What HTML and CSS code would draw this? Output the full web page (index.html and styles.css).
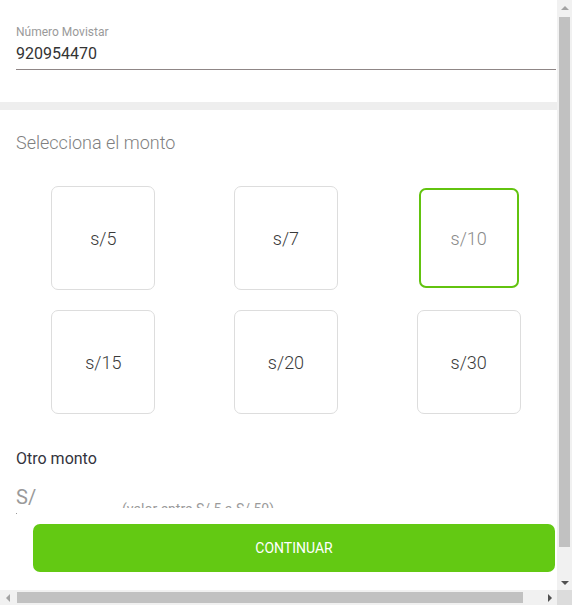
FILE: index.html
```html
<!DOCTYPE html>
<html lang="es">
<head>
<meta charset="utf-8">
<title>Recarga Movistar</title>
<link rel="stylesheet" href="styles.css">
</head>
<body>
<div class="page">
  <section class="phone">
    <div class="phone-label">Número Movistar</div>
    <div class="phone-value">920954470</div>
  </section>
  <div class="divider"></div>
  <section class="amounts">
    <h2 class="amounts-title">Selecciona el monto</h2>
    <div class="amount-grid">
      <div class="amount">s/5</div>
      <div class="amount">s/7</div>
      <div class="amount selected">s/10</div>
      <div class="amount">s/15</div>
      <div class="amount">s/20</div>
      <div class="amount">s/30</div>
    </div>
  </section>
  <section class="other">
    <h3 class="other-title">Otro monto</h3>
    <div class="other-input">
      <span class="other-prefix">S/</span>
      <span class="other-hint">(valor entre S/ 5 a S/ 50)</span>
    </div>
    <div class="other-caret"></div>
  </section>
</div>
<footer class="footer">
  <button class="continue">CONTINUAR</button>
</footer>
<div class="vscroll">
  <span class="sb-btn"><span class="tri tri-up"></span></span>
  <span class="vthumb"></span>
  <span class="sb-btn sb-end"><span class="tri tri-down"></span></span>
</div>
<div class="hscroll">
  <span class="sb-btn"><span class="tri tri-left"></span></span>
  <span class="hthumb"></span>
  <span class="sb-btn sb-end"><span class="tri tri-right"></span></span>
</div>
<div class="sb-corner"></div>
</body>
</html>
```
FILE: styles.css
```css
html, body {
  margin: 0;
  padding: 0;
  background: #ffffff;
  overflow: hidden;
}
body {
  font-family: Roboto, "Liberation Sans", sans-serif;
}
.page {
  width: 572px;
}
.phone {
  padding: 25px 16px 0 16px;
  margin-bottom: 32px;
}
.phone-label {
  font-size: 12px;
  line-height: 14px;
  color: #9a9a9a;
}
.phone-value {
  margin-top: 5px;
  font-size: 16px;
  line-height: 19px;
  color: #333333;
  padding-bottom: 6px;
  border-bottom: 1px solid #8f8686;
}
.divider {
  height: 8px;
  background: #eeeeee;
}
.amounts {
  padding: 22px 12px 0 12px;
}
.amounts-title {
  margin: 0 0 0 4px;
  font-size: 18px;
  line-height: 21px;
  font-weight: 300;
  color: #7f7f7f;
}
.amount-grid {
  margin-top: 33px;
  display: grid;
  grid-template-columns: repeat(3, 1fr);
  justify-items: center;
  row-gap: 20px;
}
.amount {
  box-sizing: border-box;
  width: 104px;
  height: 104px;
  border: 1px solid #dddddd;
  border-radius: 7px;
  display: flex;
  align-items: center;
  justify-content: center;
  font-size: 18px;
  font-weight: 300;
  color: #3a3a3a;
}
.amount.selected {
  width: 100px;
  height: 100px;
  margin: 2px;
  border: 2px solid #62c30f;
  color: #8a8a8a;
}
.other {
  padding: 35px 16px 0 16px;
}
.other-title {
  margin: 0;
  font-size: 16px;
  line-height: 19px;
  font-weight: 400;
  color: #33333d;
}
.other-input {
  margin-top: 18px;
  height: 22px;
  overflow: hidden;
  display: flex;
  align-items: flex-start;
}
.other-prefix {
  font-size: 20px;
  line-height: 23px;
  color: #9a9a9a;
  width: 106px;
}
.other-hint {
  margin-top: 15px;
  font-size: 14px;
  line-height: 16px;
  color: #9a9a9a;
}
.other-caret {
  margin-top: 5px;
  width: 1px;
  height: 1px;
  background: #9a9a9a;
}
.footer {
  position: fixed;
  left: 0;
  right: 15px;
  bottom: 15px;
  background: #ffffff;
  padding: 8px 2px 18px 33px;
}
.continue {
  display: block;
  width: 100%;
  height: 48px;
  border: 0;
  border-radius: 7px;
  background: #63c913;
  color: #ffffff;
  font-family: Roboto, "Liberation Sans", sans-serif;
  font-size: 14px;
  font-weight: 400;
}
/* drawn browser scrollbars */
.vscroll {
  position: fixed;
  top: 0;
  right: 0;
  width: 15px;
  height: 590px;
  background: #f1f1f1;
  display: flex;
  flex-direction: column;
  align-items: center;
}
.hscroll {
  position: fixed;
  left: 0;
  bottom: 0;
  width: 557px;
  height: 15px;
  background: #f1f1f1;
  display: flex;
  align-items: center;
}
.sb-corner {
  position: fixed;
  right: 0;
  bottom: 0;
  width: 15px;
  height: 15px;
  background: #dcdcdc;
}
.sb-btn {
  width: 15px;
  height: 15px;
  flex: 0 0 15px;
  display: flex;
  align-items: center;
  justify-content: center;
}
.sb-end {
  margin-top: auto;
}
.hscroll .sb-end {
  margin-top: 0;
  margin-left: auto;
}
.vthumb {
  margin-top: 2px;
  width: 11px;
  height: 530px;
  background: #c1c1c1;
}
.hthumb {
  margin-left: 2px;
  width: 506px;
  height: 11px;
  background: #c1c1c1;
}
.tri {
  width: 0;
  height: 0;
}
.tri-up {
  border-left: 4px solid transparent;
  border-right: 4px solid transparent;
  border-bottom: 4px solid #a3a3a3;
}
.tri-down {
  border-left: 4px solid transparent;
  border-right: 4px solid transparent;
  border-top: 4px solid #505050;
}
.tri-left {
  border-top: 4px solid transparent;
  border-bottom: 4px solid transparent;
  border-right: 4px solid #a3a3a3;
}
.tri-right {
  border-top: 4px solid transparent;
  border-bottom: 4px solid transparent;
  border-left: 4px solid #505050;
}
```
